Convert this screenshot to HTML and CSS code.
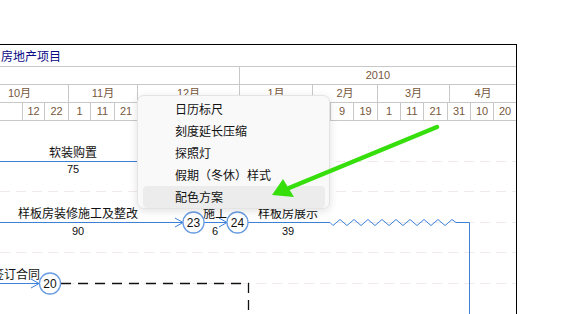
FILE: index.html
```html
<!DOCTYPE html>
<html lang="zh-CN">
<head>
    <meta charset="UTF-8">
    <title>房地产项目 - 网络图</title>
    <link rel="stylesheet" href="styles.css">
</head>
<body>
<div class="page">
    <div class="chart">
        <div class="title">房地产项目</div>

        <!-- timescale: year / month / day -->
        <div class="scale-row">
            <div class="cell" style="width:240px"></div>
            <div class="cell last">2010</div>
        </div>
        <div class="scale-row months">
            <div class="cell" style="width:98px">10月</div>
            <div class="cell" style="width:69px">11月</div>
            <div class="cell" style="width:102px">12月</div>
            <div class="cell" style="width:73px">1月</div>
            <div class="cell" style="width:65px">2月</div>
            <div class="cell" style="width:72px">3月</div>
            <div class="cell last">4月</div>
        </div>
        <div class="scale-row">
            <div class="cell" style="width:23px"></div>
            <div class="cell" style="width:22px">12</div>
            <div class="cell" style="width:24px">22</div>
            <div class="cell" style="width:22px">1</div>
            <div class="cell" style="width:24px">11</div>
            <div class="cell" style="width:23px">21</div>
            <div class="cell" style="width:23px">1</div>
            <div class="cell" style="width:23px">11</div>
            <div class="cell" style="width:23px">21</div>
            <div class="cell" style="width:33px">31</div>
            <div class="cell" style="width:23px">1</div>
            <div class="cell" style="width:23px">11</div>
            <div class="cell" style="width:23px">21</div>
            <div class="cell" style="width:22px">31</div>
            <div class="cell" style="width:23px">9</div>
            <div class="cell" style="width:24px">19</div>
            <div class="cell" style="width:23px">1</div>
            <div class="cell" style="width:23px">11</div>
            <div class="cell" style="width:24px">21</div>
            <div class="cell" style="width:23px">31</div>
            <div class="cell" style="width:23px">10</div>
            <div class="cell last">20</div>
        </div>

        <!-- network diagram -->
        <svg class="network" width="516" height="193" viewBox="0 121 516 193">
            <g class="grid">
                <line x1="0" y1="161.5" x2="516" y2="161.5"/>
                <line x1="0" y1="191.5" x2="516" y2="191.5"/>
                <line x1="0" y1="222.5" x2="516" y2="222.5"/>
                <line x1="0" y1="252.5" x2="516" y2="252.5"/>
                <line x1="0" y1="283.5" x2="516" y2="283.5"/>
            </g>

            <!-- 软装购置 -->
            <line class="act" x1="0" y1="161.5" x2="200" y2="161.5"/>
            <text class="name" x="73" y="157">软装购置</text>
            <text class="dur" x="73" y="173">75</text>

            <!-- 样板房装修施工及整改 -> 23 -> 24 -> 样板房展示 -->
            <line class="act" x1="0" y1="222.5" x2="183" y2="222.5"/>
            <polyline class="act" points="175,218 183,222.5 175,227"/>
            <text class="name" x="78" y="218">样板房装修施工及整改</text>
            <text class="dur" x="78" y="235">90</text>

            <line class="act" x1="204" y1="222.5" x2="227" y2="222.5"/>
            <polyline class="act" points="219,218 227,222.5 219,227"/>
            <text class="name" x="215" y="218">施工</text>
            <text class="dur" x="215" y="235">6</text>

            <line class="act" x1="248" y1="222.5" x2="330" y2="222.5"/>
            <text class="name" x="288" y="218">样板房展示</text>
            <text class="dur" x="288" y="235">39</text>
            <path class="act" d="M330 222.5 L333 225.5 L340 219.5 L347 225.5 L354 219.5 L361 225.5 L368 219.5 L375 225.5 L382 219.5 L389 225.5 L396 219.5 L403 225.5 L410 219.5 L417 225.5 L424 219.5 L431 225.5 L438 219.5 L445 225.5 L452 219.5 L456 222.5 H469.5 V314"/>

            <circle class="node" cx="193.5" cy="222.5" r="10.5"/>
            <text class="num" x="193.5" y="226.5">23</text>
            <circle class="node" cx="237.5" cy="222.5" r="10.5"/>
            <text class="num" x="237.5" y="226.5">24</text>

            <!-- 签订合同 -> 20 -->
            <line class="act" x1="0" y1="283.5" x2="39" y2="283.5"/>
            <polyline class="act" points="31,279 39,283.5 31,288"/>
            <text class="name" x="16" y="279">签订合同</text>
            <path class="virtual" d="M61 283.5 H248.5 V314"/>
            <circle class="node" cx="50" cy="283.5" r="10.5"/>
            <text class="num" x="50" y="287.5">20</text>
        </svg>
    </div>

    <!-- context menu -->
    <div class="menu">
        <div class="menu-item">日历标尺</div>
        <div class="menu-item">刻度延长压缩</div>
        <div class="menu-item">探照灯</div>
        <div class="menu-item">假期（冬休）样式</div>
        <div class="menu-item active">配色方案</div>
    </div>

    <!-- green pointer arrow -->
    <svg class="pointer" width="561" height="314">
        <line x1="437" y1="127" x2="289" y2="188"/>
        <polygon points="272,195 283,179 294,197"/>
    </svg>
</div>
</body>
</html>
```

FILE: styles.css
```css
body {
    margin: 0;
    background: #fff;
    overflow: hidden;
}
.page {
    position: relative;
    width: 561px;
    height: 314px;
    overflow: hidden;
}
.chart {
    margin-top: 44px;
    width: 517px;
    height: 270px;
    border-top: 1px solid #000;
    border-right: 1px solid #000;
    box-sizing: border-box;
    overflow: hidden;
}
.title {
    height: 21px;
    padding-left: 1px;
    font: 12px "Noto Sans CJK SC", sans-serif;
    line-height: 21px;
    color: #0a0a86;
    border-bottom: 1px solid #c8c8c8;
}
.scale-row {
    display: flex;
    height: 18px;
    border-bottom: 1px solid #c8c8c8;
    box-sizing: border-box;
}
.months {
    margin-left: -29px;
}
.cell {
    flex-shrink: 0;
    height: 17px;
    box-sizing: border-box;
    border-right: 1px solid #c8c8c8;
    text-align: center;
    font: 11px "Liberation Sans", "Noto Sans CJK SC", sans-serif;
    line-height: 17px;
    color: #77583c;
}
.cell.last {
    flex: 1;
    border-right: none;
}
.network {
    display: block;
}
.grid line {
    stroke: #f0ebe8;
    stroke-width: 1;
    stroke-dasharray: 10 6;
}
.act {
    fill: none;
    stroke: #3d7fd9;
    stroke-width: 1;
}
.virtual {
    fill: none;
    stroke: #111;
    stroke-width: 1.3;
    stroke-dasharray: 10 7;
}
.node {
    fill: #fff;
    stroke: #6b9de2;
    stroke-width: 1.3;
}
.name {
    font: 12px "Noto Sans CJK SC", sans-serif;
    text-anchor: middle;
    fill: #111;
}
.dur {
    font: 11px "Liberation Sans", sans-serif;
    text-anchor: middle;
    fill: #111;
}
.num {
    font: 12px "Liberation Sans", sans-serif;
    text-anchor: middle;
    fill: #111;
}

/* context menu */
.menu {
    position: absolute;
    left: 137px;
    top: 95px;
    width: 193px;
    height: 114px;
    box-sizing: border-box;
    padding: 2px 4px 2px 5px;
    background: #f9f9f9;
    border: 1px solid #e4e4e4;
    border-radius: 7px;
    box-shadow: 0 2px 8px rgba(0, 0, 0, 0.12);
}
.menu-item {
    height: 22px;
    padding-left: 32px;
    font: 12px "Noto Sans CJK SC", sans-serif;
    line-height: 22px;
    color: #111;
    border-radius: 4px;
}
.menu-item.active {
    background: #ececec;
}

.pointer {
    position: absolute;
    left: 0;
    top: 0;
    pointer-events: none;
}
.pointer line {
    stroke: #36df0c;
    stroke-width: 4.5;
    stroke-linecap: round;
}
.pointer polygon {
    fill: #36df0c;
}
```
